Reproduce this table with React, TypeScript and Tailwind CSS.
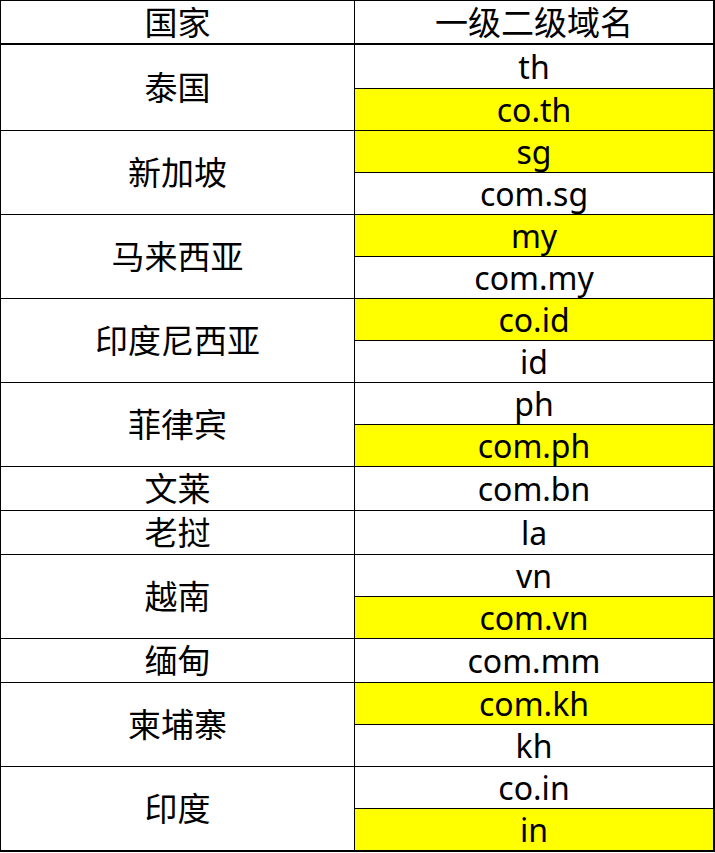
const groups: { country: string; rows: { text: string; hl?: boolean; h: string }[] }[] = [
  { country: '泰国', rows: [{ text: 'th', h: 'h-[44px]' }, { text: 'co.th', hl: true, h: 'h-[41px]' }] },
  { country: '新加坡', rows: [{ text: 'sg', hl: true, h: 'h-[42px]' }, { text: 'com.sg', h: 'h-[41px]' }] },
  { country: '马来西亚', rows: [{ text: 'my', hl: true, h: 'h-[42px]' }, { text: 'com.my', h: 'h-[41px]' }] },
  { country: '印度尼西亚', rows: [{ text: 'co.id', hl: true, h: 'h-[42px]' }, { text: 'id', h: 'h-[41px]' }] },
  { country: '菲律宾', rows: [{ text: 'ph', h: 'h-[42px]' }, { text: 'com.ph', hl: true, h: 'h-[41px]' }] },
  { country: '文莱', rows: [{ text: 'com.bn', h: 'h-[43px]' }] },
  { country: '老挝', rows: [{ text: 'la', h: 'h-[43px]' }] },
  { country: '越南', rows: [{ text: 'vn', h: 'h-[42px]' }, { text: 'com.vn', hl: true, h: 'h-[41px]' }] },
  { country: '缅甸', rows: [{ text: 'com.mm', h: 'h-[43px]' }] },
  { country: '柬埔寨', rows: [{ text: 'com.kh', hl: true, h: 'h-[42px]' }, { text: 'kh', h: 'h-[41px]' }] },
  { country: '印度', rows: [{ text: 'co.in', h: 'h-[42px]' }, { text: 'in', hl: true, h: 'h-[41px]' }] },
];

export default function App() {
  return (
    <div className="bg-white w-[715px] h-[853px] font-['Noto_Sans','Noto_Sans_CJK_SC',sans-serif] text-[32px] text-black">
      <div className="w-[715px] border-t border-l border-r-2 border-b-2 border-black">
        {/* header */}
        <div className="flex h-[44px] border-b-2 border-black text-[33px]">
          <div className="w-[354px] border-r border-black flex items-center justify-center leading-none">国家</div>
          <div className="flex-1 flex items-center justify-center leading-none">一级二级域名</div>
        </div>

        {groups.map((g, gi) => (
          <div key={g.country} className={`flex ${gi < groups.length - 1 ? 'border-b border-black' : ''}`}>
            <div className="w-[354px] border-r border-black flex items-center justify-center leading-none text-[33px]">{g.country}</div>
            <div className="flex-1 flex flex-col">
              {g.rows.map((r, ri) => (
                <div
                  key={r.text}
                  className={`${r.h} flex items-center justify-center leading-none ${r.hl ? 'bg-[#ffff00]' : ''} ${ri < g.rows.length - 1 ? 'border-b border-black' : ''}`}
                >
                  {r.text}
                </div>
              ))}
            </div>
          </div>
        ))}
      </div>
    </div>
  );
}
